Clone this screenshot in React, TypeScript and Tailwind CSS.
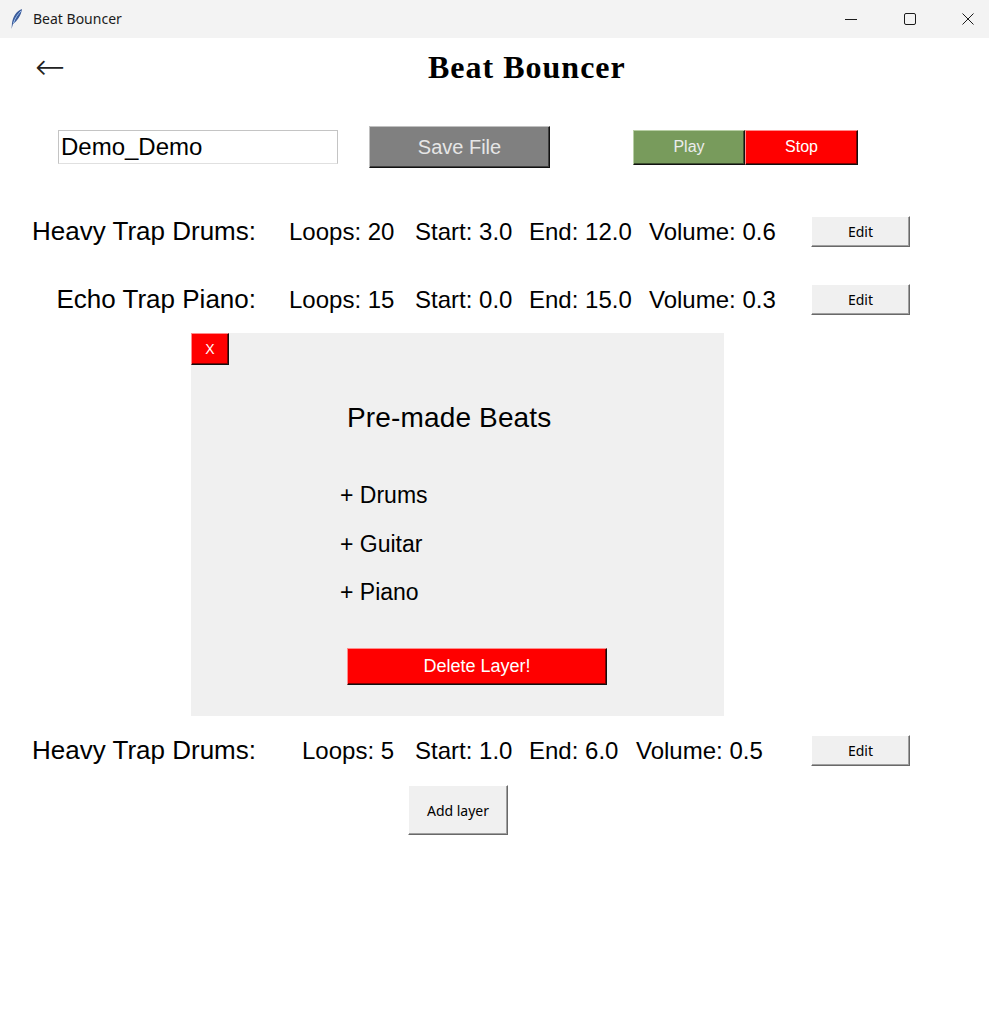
import { ReactNode } from 'react'

const raisedGray =
  'bg-[#f0f0f0] border border-t-[#ffffff] border-l-[#ffffff] border-r-[#696969] border-b-[#696969] shadow-[inset_-1px_-1px_0_#a0a0a0]'

function TitleBar() {
  return (
    <div className="h-[38px] bg-[#f3f3f3] flex items-center font-['Noto_Sans',sans-serif] text-[14px] text-[#1b1b1b]">
      <div className="w-[33px] flex justify-center">
        <svg width="14" height="22" viewBox="0 0 14 22">
          <path d="M12 1 C6 3 3 9 2 15 L1.5 21 L3 16 C7 13 11 8 12 1 Z" fill="#3b5b9a" />
          <path d="M11 3 C8 6 5 10 3.5 15" stroke="#9fc2ef" strokeWidth="1" fill="none" />
        </svg>
      </div>
      <span className="-mt-[1px]">Beat Bouncer</span>
      <div className="ml-auto mr-[15px] flex items-center gap-[46px]">
        <svg width="12" height="12" viewBox="0 0 12 12">
          <path d="M0 6.5 H12" stroke="#1b1b1b" strokeWidth="1" />
        </svg>
        <svg width="12" height="12" viewBox="0 0 12 12" className="ml-[1px]">
          <rect x="0.5" y="0.5" width="11" height="11" rx="1.5" stroke="#1b1b1b" strokeWidth="1" fill="none" />
        </svg>
        <svg width="12" height="12" viewBox="0 0 12 12">
          <path d="M0.5 0.5 L11.5 11.5 M11.5 0.5 L0.5 11.5" stroke="#1b1b1b" strokeWidth="1" />
        </svg>
      </div>
    </div>
  )
}

function EditButton({ children = 'Edit', className = '' }: { children?: ReactNode; className?: string }) {
  return (
    <button
      type="button"
      className={`${raisedGray} font-['Noto_Sans',sans-serif] text-[14px] text-black flex items-center justify-center ${className}`}
    >
      {children}
    </button>
  )
}

type Layer = {
  name: string
  loops: string
  start: string
  end: string
  volume: string
  cells: [number, number, number, number]
}

function LayerRow({ layer }: { layer: Layer }) {
  const [l, s, e, v] = layer.cells
  return (
    <div className="h-[31px] flex items-center text-[24px] text-black">
      <div className="w-[256px] text-right text-[26px] leading-[31px] whitespace-nowrap">{layer.name}</div>
      <div className="whitespace-nowrap leading-[31px]" style={{ marginLeft: l, width: s }}>
        Loops: {layer.loops}
      </div>
      <div className="whitespace-nowrap leading-[31px]" style={{ width: e }}>
        Start: {layer.start}
      </div>
      <div className="whitespace-nowrap leading-[31px]" style={{ width: v }}>
        End: {layer.end}
      </div>
      <div className="whitespace-nowrap leading-[31px] flex-1">Volume: {layer.volume}</div>
      <EditButton className="w-[99px] h-[31px] mr-[79px]" />
    </div>
  )
}

const layers: Layer[] = [
  { name: 'Heavy Trap Drums:', loops: '20', start: '3.0', end: '12.0', volume: '0.6', cells: [33, 126, 114, 120] },
  { name: 'Echo Trap Piano:', loops: '15', start: '0.0', end: '15.0', volume: '0.3', cells: [33, 126, 114, 120] },
  { name: 'Heavy Trap Drums:', loops: '5', start: '1.0', end: '6.0', volume: '0.5', cells: [46, 113, 114, 107] },
]

function BeatsPanel() {
  return (
    <div className="ml-[191px] w-[533px] h-[383px] bg-[#f0f0f0] flex flex-col">
      <button
        type="button"
        className="w-[38px] h-[32px] bg-[#ff0000] text-white text-[14px] flex items-center justify-center border border-t-[#ff8c8c] border-l-[#ff8c8c] border-r-[#111] border-b-[#111] shadow-[inset_-1px_-1px_0_#800000]"
      >
        X
      </button>
      <div className="pl-[156px] mt-[37px] text-[28px] leading-[32px] tracking-[0.15px] text-black">Pre-made Beats</div>
      <div className="pl-[149px] mt-[47px] flex flex-col gap-[20.5px] text-[23px] leading-[28px] text-black">
        <span>+ Drums</span>
        <span>+ Guitar</span>
        <span>+ Piano</span>
      </div>
      <button
        type="button"
        className="ml-[156px] mt-[42px] w-[260px] h-[37px] bg-[#ff0000] text-white text-[18px] flex items-center justify-center border border-t-[#ff8c8c] border-l-[#ff8c8c] border-r-[#111] border-b-[#111] shadow-[inset_-1px_-1px_0_#800000]"
      >
        Delete Layer!
      </button>
    </div>
  )
}

export default function App() {
  return (
    <div className="w-[989px] h-[1033px] bg-white flex flex-col font-['Liberation_Sans',Arial,sans-serif] overflow-hidden">
      <TitleBar />
      <div className="h-[60px] flex items-center">
        <span className="ml-[35px] w-[32px] text-[36px] leading-[32px] text-[#222] font-['DejaVu_Sans',sans-serif] -mt-[3px] font-light">
          ←
        </span>
        <h1 className="ml-[361px] font-['Liberation_Serif',serif] font-bold text-[32px] tracking-[1px] text-black leading-none -mt-[2px]">
          Beat Bouncer
        </h1>
      </div>

      <div className="mt-[28px] h-[42px] flex items-center">
        <div className="ml-[58px] w-[280px] h-[34px] border border-[#c4c4c4] border-b-[#e0e0e0] flex items-center pl-[2px] text-[24px] text-black leading-none">
          Demo_Demo
        </div>
        <button
          type="button"
          className="ml-[31px] w-[181px] h-[42px] bg-[#808080] text-[#e6e6e6] text-[20px] flex items-center justify-center border border-t-[#c0c0c0] border-l-[#c0c0c0] border-r-[#111] border-b-[#111] shadow-[inset_-1px_-1px_0_#404040]"
        >
          Save File
        </button>
        <div className="ml-[83px] flex">
          <button
            type="button"
            className="w-[112px] h-[35px] bg-[#789b5c] text-[#ececec] text-[16px] flex items-center justify-center border border-t-[#b8cfa5] border-l-[#b8cfa5] border-r-[#111] border-b-[#111] shadow-[inset_-1px_-1px_0_#3c4e2e]"
          >
            Play
          </button>
          <button
            type="button"
            className="w-[113px] h-[35px] bg-[#ff0000] text-[#ffffff] text-[16px] flex items-center justify-center border border-t-[#ff8c8c] border-l-[#ff8c8c] border-r-[#111] border-b-[#111] shadow-[inset_-1px_-1px_0_#800000]"
          >
            Stop
          </button>
        </div>
      </div>

      <div className="mt-[48px]">
        <LayerRow layer={layers[0]} />
      </div>
      <div className="mt-[37px]">
        <LayerRow layer={layers[1]} />
      </div>
      <div className="mt-[18px]">
        <BeatsPanel />
      </div>
      <div className="mt-[19px]">
        <LayerRow layer={layers[2]} />
      </div>
      <div className="mt-[19px] flex">
        <EditButton className="ml-[408px] w-[100px] h-[50px]">Add layer</EditButton>
      </div>
    </div>
  )
}
